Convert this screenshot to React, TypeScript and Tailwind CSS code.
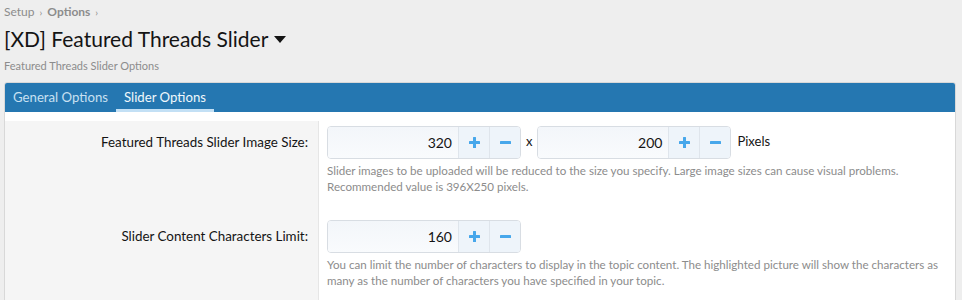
import React from 'react';

const PlusIcon = () => (
  <svg width="11" height="11" viewBox="0 0 11 11">
    <rect x="4" y="0" width="3" height="11" rx="0.5" fill="#47a7eb" />
    <rect x="0" y="4" width="11" height="3" rx="0.5" fill="#47a7eb" />
  </svg>
);

const MinusIcon = () => (
  <svg width="11" height="11" viewBox="0 0 11 11">
    <rect x="0" y="4" width="11" height="3" rx="0.5" fill="#47a7eb" />
  </svg>
);

interface NumberBoxProps {
  value: number;
}

const NumberBox: React.FC<NumberBoxProps> = ({ value }) => (
  <div className="flex h-[33px] w-[194px] rounded-[4px] border border-[#d8dde3] overflow-hidden">
    <div className="flex-1 flex items-center justify-end pr-[6px] bg-gradient-to-b from-[#f3f6fa] to-[#f9fbfd] text-[14px] text-[#141414]">
      {value}
    </div>
    <button className="w-[31px] flex items-center justify-center bg-[#eef4fa] border-l border-[#dfe5ec]">
      <PlusIcon />
    </button>
    <button className="w-[31px] flex items-center justify-center bg-[#eef4fa] border-l border-[#dfe5ec]">
      <MinusIcon />
    </button>
  </div>
);

interface RowProps {
  label: string;
  children: React.ReactNode;
  hint: React.ReactNode;
}

const FormRow: React.FC<RowProps> = ({ label, children, hint }) => (
  <div className="flex">
    <div className="w-[314px] shrink-0 bg-[#f5f5f5] border-r border-[#e6e6e6] text-right pr-[10px] pt-[12px] text-[13.4px] leading-[18px] text-[#141414]">
      {label}
    </div>
    <div className="flex-1 pl-[8px] pt-[5px] pb-[20px]">
      {children}
      <div className="mt-[4px] text-[11.6px] leading-[16px] text-[#8c8c8c]">{hint}</div>
    </div>
  </div>
);

const App: React.FC = () => {
  return (
    <div
      className="w-[962px] h-[300px] overflow-hidden bg-[#eeeeee] pl-[4px] pr-[6px]"
      style={{ fontFamily: 'Lato, "Open Sans", sans-serif' }}
    >
      <div className="pt-[3px] text-[12px] text-[#8c8c8c] flex items-center gap-[5px]">
        <span>Setup</span>
        <span className="text-[10px]">›</span>
        <span className="font-bold">Options</span>
        <span className="text-[10px]">›</span>
      </div>
      <h1 className="mt-[4px] flex items-center text-[21px] leading-[28px] text-[#141414]">
        [XD] Featured Threads Slider
        <svg width="12" height="8" viewBox="0 0 12 8" className="ml-[6px] mt-[2px]">
          <path d="M0 0 L12 0 L6 7 Z" fill="#141414" />
        </svg>
      </h1>
      <div className="mt-[5px] text-[11px] text-[#8c8c8c]">Featured Threads Slider Options</div>

      <div className="mt-[7px] border border-[#d8d8d8] rounded-t-[3px] overflow-hidden bg-white">
        <div className="h-[29px] bg-[#2577b1] flex">
          <div className="px-[8px] pt-[5px] text-[13.2px] text-[#c8e0f2]">General Options</div>
          <div className="px-[8px] pt-[5px] text-[13.2px] text-[#f0f7fc] border-b-[3px] border-[#c3e0f5]">
            Slider Options
          </div>
        </div>

        <div className="pt-[9px]">
          <FormRow
            label="Featured Threads Slider Image Size:"
            hint={
              <>
                Slider images to be uploaded will be reduced to the size you specify. Large image sizes can cause visual problems.
                <br />
                Recommended value is 396X250 pixels.
              </>
            }
          >
            <div className="flex items-center">
              <NumberBox value={320} />
              <span className="mx-[5px] text-[13px] text-[#141414]">x</span>
              <NumberBox value={200} />
              <span className="ml-[6px] text-[13px] text-[#141414]">Pixels</span>
            </div>
          </FormRow>
          <FormRow
            label="Slider Content Characters Limit:"
            hint={
              <>
                You can limit the number of characters to display in the topic content. The highlighted picture will show the characters as
                <br />
                many as the number of characters you have specified in your topic.
              </>
            }
          >
            <NumberBox value={160} />
          </FormRow>
        </div>
      </div>
    </div>
  );
};

export default App;
